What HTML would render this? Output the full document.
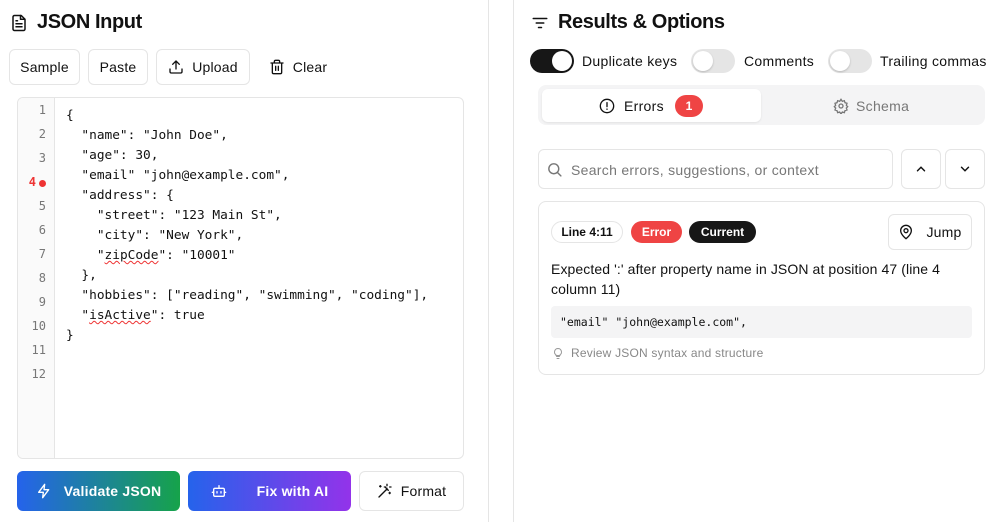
<!DOCTYPE html>
<html><head><meta charset="utf-8"><style>
*{box-sizing:border-box;margin:0;padding:0}
body{width:1002px;height:522px;background:#fff;font-family:"Liberation Sans",sans-serif;color:#111;position:relative;overflow:hidden}
.abs{position:absolute}
.vl{position:absolute;top:0;bottom:0;width:1px;background:#e5e5e5}
h1{position:absolute;font-size:20px;font-weight:bold;letter-spacing:-0.4px}
.btn{position:absolute;border:1px solid #e5e5e5;border-radius:6px;background:#fff;font-size:14px;display:flex;align-items:center;justify-content:center;gap:8px;letter-spacing:0.2px}
.code{position:absolute;left:17px;top:97px;width:447px;height:362px;border:1px solid #e5e5e5;border-radius:6px;overflow:hidden}
.gut{position:absolute;left:0;top:0;bottom:0;width:37px;background:#fafafa;border-right:1px solid #e5e5e5}
.ln{position:absolute;right:8px;font-family:"DejaVu Sans Mono",monospace;font-size:12px;color:#777}
pre{position:absolute;left:48px;top:8px;font-family:"DejaVu Sans Mono",monospace;font-size:12.8px;line-height:20px;color:#111}
.sq{text-decoration:underline wavy #e33;text-decoration-thickness:1px}
.tog{position:absolute;width:44px;height:24px;border-radius:12px;background:#e5e5e5}
.tog i{position:absolute;top:2px;width:20px;height:20px;border-radius:50%;background:#fff;box-shadow:0 1px 2px rgba(0,0,0,.2)}
.lbl{position:absolute;font-size:14px;letter-spacing:0.3px}
.pill{position:absolute;height:22px;border-radius:11px;font-size:12px;font-weight:bold;display:flex;align-items:center;justify-content:center}
</style></head><body>
<div class="vl" style="left:488px"></div>
<div class="vl" style="left:513px"></div>

<svg class="abs" style="left:10px;top:13px" width="18" height="20" viewBox="0 0 24 24" fill="none" stroke="#111" stroke-width="2" stroke-linecap="round" stroke-linejoin="round"><path d="M15 2H6a2 2 0 0 0-2 2v16a2 2 0 0 0 2 2h12a2 2 0 0 0 2-2V7z"/><path d="M14 2v5h5M8 13h8M8 17h8M8 9h2"/></svg>
<h1 style="left:37px;top:11px">JSON Input</h1>

<div class="btn" style="left:9px;top:49px;width:71px;height:36px">Sample</div>
<div class="btn" style="left:88px;top:49px;width:60px;height:36px">Paste</div>
<div class="btn" style="left:156px;top:49px;width:94px;height:36px"><svg width="16" height="16" viewBox="0 0 24 24" fill="none" stroke="#111" stroke-width="2" stroke-linecap="round" stroke-linejoin="round"><path d="M21 15v4a2 2 0 0 1-2 2H5a2 2 0 0 1-2-2v-4M17 8l-5-5-5 5M12 3v12"/></svg>Upload</div>
<div class="btn" style="left:258px;top:49px;width:80px;height:36px;border-color:transparent"><svg width="16" height="16" viewBox="0 0 24 24" fill="none" stroke="#111" stroke-width="2" stroke-linecap="round" stroke-linejoin="round"><path d="M3 6h18M19 6v14a2 2 0 0 1-2 2H7a2 2 0 0 1-2-2V6M8 6V4a2 2 0 0 1 2-2h4a2 2 0 0 1 2 2v2M10 11v6M14 11v6"/></svg>Clear</div>

<div class="code">
<div class="gut">
<div class="ln" style="top:5px">1</div><div class="ln" style="top:29px">2</div><div class="ln" style="top:53px">3</div>
<div class="ln" style="top:77px;right:18px;color:#e33;font-weight:bold">4</div><div class="abs" style="left:21px;top:82px;width:7px;height:7px;border-radius:50%;background:#e33"></div>
<div class="ln" style="top:101px">5</div><div class="ln" style="top:125px">6</div><div class="ln" style="top:149px">7</div><div class="ln" style="top:173px">8</div><div class="ln" style="top:197px">9</div><div class="ln" style="top:221px">10</div><div class="ln" style="top:245px">11</div><div class="ln" style="top:269px">12</div>
</div>
<pre>{
  "name": "John Doe",
  "age": 30,
  "email" "john@example.com",
  "address": {
    "street": "123 Main St",
    "city": "New York",
    "<span class="sq">zipCode</span>": "10001"
  },
  "hobbies": ["reading", "swimming", "coding"],
  "<span class="sq">isActive</span>": true
}</pre>
</div>

<div class="btn" style="left:17px;top:471px;width:163px;height:40px;border:none;color:#fff;font-weight:bold;background:linear-gradient(90deg,#2563eb,#16a34a)"><svg width="16" height="16" viewBox="0 0 24 24" fill="none" stroke="#fff" stroke-width="2" stroke-linejoin="round"><path d="M13 2L4 14h7l-1 8 9-12h-7z"/></svg>&nbsp;Validate JSON</div>
<div class="btn" style="left:188px;top:471px;width:163px;height:40px;border:none;color:#fff;font-weight:bold;background:linear-gradient(90deg,#2563eb,#9333ea);gap:30px"><svg width="16" height="16" viewBox="0 0 24 24" fill="none" stroke="#fff" stroke-width="2" stroke-linecap="round"><rect x="4" y="8" width="16" height="12" rx="2"/><path d="M12 8V4M2 14h2M20 14h2M9 13v2M15 13v2"/></svg>Fix with AI</div>
<div class="btn" style="left:359px;top:471px;width:105px;height:40px"><svg width="16" height="16" viewBox="0 0 24 24" fill="none" stroke="#111" stroke-width="2" stroke-linecap="round"><path d="M3 21L15 9M13 7l4 4M15 4V2M15 10V8M19 6h2M13 6h-2M19 14v2M18 15h2M5 4v2M4 5h2"/></svg>Format</div>

<svg class="abs" style="left:531px;top:14px" width="18" height="18" viewBox="0 0 24 24" fill="none" stroke="#111" stroke-width="2" stroke-linecap="round"><path d="M3 6h18M7 12h10M10 18h4"/></svg>
<h1 style="left:558px;top:11px">Results &amp; Options</h1>

<div class="tog" style="left:530px;top:49px;background:#171717"><i style="left:22px"></i></div>
<div class="lbl" style="left:582px;top:53px">Duplicate keys</div>
<div class="tog" style="left:691px;top:49px"><i style="left:2px"></i></div>
<div class="lbl" style="left:744px;top:53px">Comments</div>
<div class="tog" style="left:828px;top:49px"><i style="left:2px"></i></div>
<div class="lbl" style="left:880px;top:53px">Trailing commas</div>

<div class="abs" style="left:538px;top:85px;width:447px;height:40px;background:#f4f4f5;border-radius:8px"></div>
<div class="abs" style="left:542px;top:89px;width:219px;height:33px;background:#fff;border-radius:6px;box-shadow:0 1px 2px rgba(0,0,0,.08)"></div>
<svg class="abs" style="left:599px;top:98px" width="16" height="16" viewBox="0 0 24 24" fill="none" stroke="#111" stroke-width="2" stroke-linecap="round"><circle cx="12" cy="12" r="10"/><path d="M12 7v6M12 16.5v.5"/></svg>
<div class="lbl" style="left:624px;top:98px">Errors</div>
<div class="pill" style="left:675px;top:95px;width:28px;background:#ef4444;color:#fff">1</div>
<svg class="abs" style="left:833px;top:98px" width="16" height="16" viewBox="0 0 24 24" fill="none" stroke="#777" stroke-width="2"><circle cx="12" cy="12" r="3"/><path d="M12 2l2 3 3-1 1 3 3 1-1 3 2 2-2 2 1 3-3 1-1 3-3-1-2 3-2-3-3 1-1-3-3-1 1-3-2-2 2-2-1-3 3-1 1-3 3 1z"/></svg>
<div class="lbl" style="left:856px;top:98px;color:#777">Schema</div>

<div class="abs" style="left:538px;top:149px;width:355px;height:40px;border:1px solid #e5e5e5;border-radius:6px"></div>
<svg class="abs" style="left:546px;top:161px" width="17" height="17" viewBox="0 0 24 24" fill="none" stroke="#777" stroke-width="2" stroke-linecap="round"><circle cx="11" cy="11" r="7"/><path d="M21 21l-5-5"/></svg>
<div class="lbl" style="left:571px;top:162px;color:#777">Search errors, suggestions, or context</div>
<div class="btn" style="left:901px;top:149px;width:40px;height:40px"><svg width="14" height="14" viewBox="0 0 24 24" fill="none" stroke="#111" stroke-width="2.5" stroke-linecap="round"><path d="M6 15l6-6 6 6"/></svg></div>
<div class="btn" style="left:945px;top:149px;width:40px;height:40px"><svg width="14" height="14" viewBox="0 0 24 24" fill="none" stroke="#111" stroke-width="2.5" stroke-linecap="round"><path d="M6 9l6 6 6-6"/></svg></div>

<div class="abs" style="left:538px;top:201px;width:447px;height:174px;border:1px solid #e5e5e5;border-radius:8px"></div>
<div class="pill" style="left:551px;top:221px;width:72px;border:1px solid #e5e5e5">Line 4:11</div>
<div class="pill" style="left:631px;top:221px;width:51px;background:#ef4444;color:#fff">Error</div>
<div class="pill" style="left:689px;top:221px;width:67px;background:#171717;color:#fff">Current</div>
<div class="btn" style="left:888px;top:214px;width:84px;height:36px;gap:12px"><svg width="16" height="16" viewBox="0 0 24 24" fill="none" stroke="#111" stroke-width="2"><path d="M20 10c0 6-8 12-8 12S4 16 4 10a8 8 0 0 1 16 0z"/><circle cx="12" cy="10" r="3"/></svg>Jump</div>
<div class="abs" style="left:551px;top:259px;width:425px;font-size:14px;line-height:20px;letter-spacing:0.1px">Expected ':' after property name in JSON at position 47 (line 4 column 11)</div>
<div class="abs" style="left:551px;top:306px;width:421px;height:32px;background:#f4f4f5;border-radius:4px;font-family:'DejaVu Sans Mono',monospace;font-size:11.5px;padding:9px 0 0 9px">"email" "john@example.com",</div>
<svg class="abs" style="left:552px;top:347px" width="12" height="13" viewBox="0 0 24 24" fill="none" stroke="#999" stroke-width="2" stroke-linecap="round"><path d="M9 18h6M10 22h4M12 2a7 7 0 0 0-4 12.7V16h8v-1.3A7 7 0 0 0 12 2z"/></svg>
<div class="abs" style="left:571px;top:346px;font-size:12px;color:#888;letter-spacing:0.2px">Review JSON syntax and structure</div>
</body></html>
